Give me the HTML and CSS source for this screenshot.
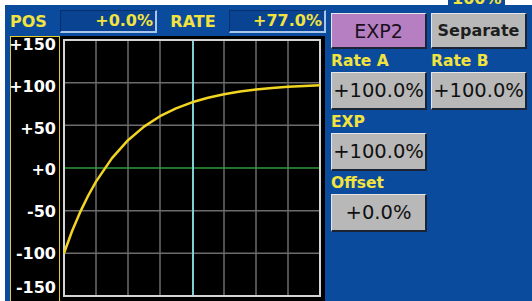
FILE: index.html
```html
<!DOCTYPE html>
<html lang="en">
<head>
<meta charset="UTF-8">
<title>EXP2 Curve</title>
<link rel="stylesheet" href="styles.css">
</head>
<body>

<div class="screen">
    <div class="top-clip"><span>100%</span></div>

    <div class="left-col">
        <div class="header-row">
            <span class="hdr-label pos-label">POS</span>
            <div class="value-box">+0.0%</div>
            <span class="hdr-label rate-label">RATE</span>
            <div class="value-box">+77.0%</div>
        </div>

        <div class="chart-row">
            <div class="axis-box">
                <span>+150</span>
                <span>+100</span>
                <span>+50</span>
                <span>+0</span>
                <span>-50</span>
                <span>-100</span>
                <span>-150</span>
            </div>
            <div class="plot-panel">
                <svg class="plot" width="260" height="260" viewBox="-2 -2 260 260">
                    <!-- 网格 -->
                    <g stroke="#6c6c6c" stroke-width="1.5">
                        <line x1="32" y1="0" x2="32" y2="256"/>
                        <line x1="64" y1="0" x2="64" y2="256"/>
                        <line x1="96" y1="0" x2="96" y2="256"/>
                        <line x1="160" y1="0" x2="160" y2="256"/>
                        <line x1="192" y1="0" x2="192" y2="256"/>
                        <line x1="224" y1="0" x2="224" y2="256"/>
                        <line x1="0" y1="42.7" x2="256" y2="42.7"/>
                        <line x1="0" y1="85.3" x2="256" y2="85.3"/>
                        <line x1="0" y1="170.7" x2="256" y2="170.7"/>
                        <line x1="0" y1="213.3" x2="256" y2="213.3"/>
                    </g>
                    <line x1="0" y1="128" x2="256" y2="128" stroke="#2f9a3c" stroke-width="1.5"/>
                    <line x1="129" y1="0" x2="129" y2="256" stroke="#7fd0d4" stroke-width="2"/>
                    <rect x="0" y="0" width="256" height="256" fill="none" stroke="#d4d4d4" stroke-width="2"/>
                    <!-- 曲线 -->
                    <polyline fill="none" stroke="#f2d422" stroke-width="2.5" stroke-linejoin="round"
                        points="0,213.3 8,191.3 16,172.4 24,156 32,141.6 48,118.1 64,100.2 80,86.6 96,76.2 112,68.3 128,62.3 144,57.7 160,54.2 176,51.5 192,49.6 208,48 224,46.8 240,45.9 256,45.2"/>
                </svg>
            </div>
        </div>
    </div>

    <div class="right-col">
        <div class="btn-row">
            <button class="btn btn-purple mode-btn">EXP2</button>
            <button class="btn mode-btn separate">Separate</button>
        </div>
        <div class="label-row">
            <span class="field-label">Rate A</span>
            <span class="field-label">Rate B</span>
        </div>
        <div class="btn-row">
            <button class="btn value-btn">+100.0%</button>
            <button class="btn value-btn">+100.0%</button>
        </div>
        <div class="label-row">
            <span class="field-label">EXP</span>
        </div>
        <div class="btn-row">
            <button class="btn value-btn">+100.0%</button>
        </div>
        <div class="label-row">
            <span class="field-label">Offset</span>
        </div>
        <div class="btn-row">
            <button class="btn value-btn">+0.0%</button>
        </div>
    </div>
</div>

</body>
</html>
```

FILE: styles.css
```css
body {
    margin: 0;
    padding: 0;
    width: 532px;
    height: 301px;
    overflow: hidden;
    background-color: #ffffff;
    font-family: "DejaVu Sans", Verdana, sans-serif;
}

.screen {
    position: relative;
    margin: 5px 0 0 5px;
    width: 527px;
    height: 296px;
    background-color: #0b4b9d;
    display: flex;
    padding: 5px 0 0 5px;
    box-sizing: border-box;
}

/* 顶部被截掉的文字，只露出下半截 */
.top-clip {
    position: absolute;
    top: -5px;
    left: 443px;
    height: 5px;
    padding: 0 4px;
    background-color: #0b4b9d;
    overflow: hidden;
}

.top-clip span {
    display: block;
    margin-top: -9px;
    color: #f2e33e;
    font-weight: bold;
    font-size: 16px;
    line-height: 16px;
}

.left-col {
    display: flex;
    flex-direction: column;
    width: 316px;
}

.header-row {
    display: flex;
    align-items: center;
    height: 23px;
}

.hdr-label {
    color: #f2e33e;
    font-weight: bold;
    font-size: 16px;
}

.pos-label {
    width: 50px;
}

.rate-label {
    width: 72px;
    text-align: center;
}

.value-box {
    width: 97px;
    height: 23px;
    box-sizing: border-box;
    background-color: #0a4392;
    border-style: solid;
    border-width: 1px 2px 2px 1px;
    border-color: #062f6b #a9c6ea #a9c6ea #062f6b;
    color: #f2e33e;
    font-size: 16px;
    font-weight: bold;
    line-height: 20px;
    text-align: right;
    padding-right: 2px;
}

.chart-row {
    display: flex;
    margin-top: 3px;
    flex: 1;
}

.axis-box {
    width: 50px;
    box-sizing: border-box;
    background-color: #000000;
    border: 1px solid #e2cf2a;
    border-bottom: none;
    display: flex;
    flex-direction: column;
    align-items: flex-end;
    gap: 25.8px;
    padding-right: 3px;
}

.axis-box span {
    color: #ffffff;
    font-weight: bold;
    font-size: 16px;
    line-height: 16px;
}

.axis-box span:last-child {
    margin-top: -8px;
}

.plot-panel {
    width: 265px;
    background-color: #000000;
    padding: 2px 0 0 2px;
    box-sizing: border-box;
}

.plot {
    display: block;
}

.right-col {
    display: flex;
    flex-direction: column;
    margin-left: 5px;
    margin-top: 3px;
}

.btn-row {
    display: flex;
    gap: 4px;
}

.label-row {
    display: flex;
    gap: 4px;
    height: 18px;
    margin-top: 3px;
    margin-bottom: 2px;
}

.field-label {
    width: 96px;
    color: #f2e33e;
    font-weight: bold;
    font-size: 15.5px;
    line-height: 18px;
}

.btn {
    width: 96px;
    height: 38px;
    padding: 0;
    box-sizing: border-box;
    background-color: #b8b8b8;
    border-style: solid;
    border-width: 1px 2px 2px 1px;
    border-color: #e6e6e6 #1c2434 #1c2434 #e6e6e6;
    color: #111111;
    font-family: "DejaVu Sans", Verdana, sans-serif;
    text-align: center;
}

.mode-btn {
    height: 36px;
    font-size: 19px;
}

.separate {
    font-size: 16px;
    font-weight: bold;
    color: #1e1e1e;
}

.btn-purple {
    background-color: #b67fc1;
    color: #1a1020;
}

.value-btn {
    font-size: 19.5px;
}
```
